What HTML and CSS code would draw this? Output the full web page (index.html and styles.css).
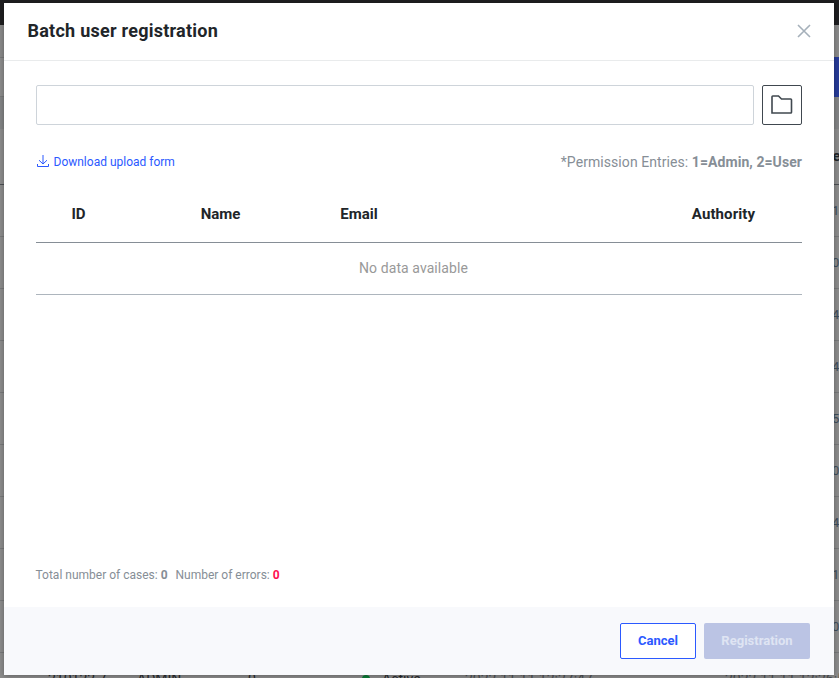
FILE: index.html
```html
<!DOCTYPE html>
<html lang="en">
<head>
<meta charset="utf-8">
<title>Batch user registration</title>
<link rel="stylesheet" href="styles.css">
</head>
<body>
<div class="page" aria-hidden="true">
  <div class="page-top"></div>
  <div class="page-strip"></div>
  <div class="page-tools"><span class="page-action"></span></div>
  <div class="page-gap"></div>
  <div class="page-head">te</div>
  <div class="page-row">1</div>
  <div class="page-row">0</div>
  <div class="page-row">4</div>
  <div class="page-row">4</div>
  <div class="page-row">5</div>
  <div class="page-row">0</div>
  <div class="page-row">4</div>
  <div class="page-row">1</div>
  <div class="page-row">0</div>
  <div class="page-row last"><span>210122 7</span><span>ADMIN</span><span>0</span><span class="state"><i></i>Active</span><span class="date">2022.11.11 12:27:47</span><span class="date">2022.11.11 12:26:55</span></div>
</div>

<section class="modal" role="dialog" aria-labelledby="title">
  <header class="modal-header">
    <h1 id="title">Batch user registration</h1>
    <button class="close" aria-label="Close"><svg width="14" height="14" viewBox="0 0 14 14"><path d="M1 1L13 13M13 1L1 13"/></svg></button>
  </header>
  <div class="modal-body">
    <div class="picker">
      <input type="text" aria-label="File">
      <button class="browse" aria-label="Browse"><svg width="22" height="20" viewBox="0 0 22 20"><path d="M1 18V1.8Q1 1 1.8 1H7.5L10.5 4H19.7Q20.5 4 20.5 4.8V17.2Q20.5 18 19.7 18Z"/></svg></button>
    </div>
    <div class="hints">
      <a class="download"><svg width="12" height="13" viewBox="0 0 12 13"><path d="M6 0V9M2 5.2L6 9L10 5.2M.5 9V11.5H11.5V9"/></svg>Download upload form</a>
      <p>*Permission Entries: <b>1=Admin, 2=User</b></p>
    </div>
    <div class="thead"><span>ID</span><span>Name</span><span>Email</span><span>Authority</span></div>
    <div class="empty">No data available</div>
    <div class="totals"><span>Total number of cases: <b>0</b></span><span>Number of errors: <b class="error">0</b></span></div>
  </div>
  <footer class="modal-footer">
    <button class="btn cancel">Cancel</button>
    <button class="btn submit" disabled>Registration</button>
  </footer>
</section>
</body>
</html>
```
FILE: styles.css
```css
* { box-sizing: border-box; }
body {
  margin: 0;
  width: 839px;
  height: 678px;
  overflow: hidden;
  position: relative;
  font-family: Roboto, sans-serif;
  color: #212529;
}
h1, p { margin: 0; }
button { padding: 0; font-family: inherit; }
svg { display: block; fill: none; stroke: currentColor; }

/* Dimmed page under the dialog */
.page { height: 678px; overflow: hidden; background: #8b8b8b; }
.page-top { height: 25px; background: #1e1e20; }
.page-strip { height: 32px; background: #888; }
.page-tools {
  height: 40px;
  display: flex;
  justify-content: flex-end;
  border-top: 1px solid #777879;
  border-bottom: 1px solid #777879;
}
.page-action { width: 20px; height: 40px; margin-top: -1px; background: #263a96; flex: none; }
.page-gap { height: 32px; background: #828384; }
.page-head {
  height: 56px;
  padding-left: 827px;
  line-height: 55px;
  font-size: 15px;
  font-weight: 700;
  letter-spacing: .3px;
  border-bottom: 1px solid #4b4f53;
}
.page-row {
  height: 52px;
  padding-left: 832px;
  line-height: 52px;
  font-size: 13px;
  color: #3f4d5a;
  border-bottom: 1px solid #777879;
}
.page-row.last {
  display: grid;
  grid-template-columns: 89px 111px 113px 107px 260px 111px;
  padding-left: 48px;
  font-size: 14px;
  color: #25282b;
  white-space: nowrap;
}
.page-row .date { margin-left: -3px; color: #4b4f53; }
.state { display: flex; align-items: center; gap: 12px; }
.state i { width: 8px; height: 8px; margin-left: 1px; border-radius: 50%; background: #087b35; }

.modal {
  position: absolute;
  left: 4px;
  top: 3px;
  width: 830px;
  height: 672px;
  display: flex;
  flex-direction: column;
  background: #fff;
  box-shadow: 0 1px 5px rgba(0, 0, 0, .3);
}
.modal-header {
  height: 58px;
  flex: none;
  display: flex;
  align-items: center;
  justify-content: space-between;
  padding: 0 23px 2px 23.5px;
  border-bottom: 1px solid #e9ebec;
}
.modal-header h1 { font-size: 18px; line-height: 24px; font-weight: 700; letter-spacing: .25px; }
.close { border: 0; background: none; color: #a5b0ba; }
.close svg { stroke-width: 1.6; }

.modal-body {
  flex: 1;
  display: flex;
  flex-direction: column;
  padding: 24px 32px 0;
}
.picker { display: flex; gap: 8px; }
.picker input {
  flex: 1;
  height: 40px;
  border: 1px solid #ced4da;
  border-radius: 2px;
  background: #fff;
}
.browse {
  width: 40px;
  height: 40px;
  display: flex;
  align-items: center;
  justify-content: center;
  border: 1px solid #40484f;
  border-radius: 2px;
  background: #fff;
  color: #40484f;
}
.browse svg { stroke-width: 1.6; }
.hints {
  height: 74px;
  display: flex;
  align-items: center;
  justify-content: space-between;
  font-size: 14px;
  line-height: 20px;
  color: #868e96;
}
.hints p { letter-spacing: .07px; }
.download { display: flex; align-items: center; gap: 4.5px; padding-left: 1px; font-size: 12px; color: #2b59ff; }
.download svg { margin-bottom: 2px; }
.thead {
  height: 44px;
  display: grid;
  grid-template-columns: 85px 199px 78px 247px 1fr;
  padding-bottom: 14px;
  border-bottom: 1px solid #868e96;
  font-size: 15px;
  font-weight: 700;
  line-height: 30px;
  text-align: center;
}
.thead span:nth-child(4) { grid-column: 5; letter-spacing: .1px; }
.empty {
  height: 52px;
  padding-right: 11px;
  border-bottom: 1px solid #adb5bd;
  font-size: 14px;
  line-height: 51px;
  letter-spacing: .08px;
  text-align: center;
  color: #999;
}
.totals { display: flex; gap: 8px; margin: auto 0 24px -.5px; font-size: 12px; line-height: 16px; color: #868e96; }
.totals .error { color: #ff1150; }

.modal-footer {
  height: 68px;
  flex: none;
  display: flex;
  align-items: center;
  justify-content: flex-end;
  gap: 8px;
  padding-right: 24px;
  background: #f8f9fc;
}
.btn { height: 36px; padding-bottom: 2px; border-radius: 2px; font-size: 13px; font-weight: 700; }
.cancel { width: 76px; border: 1px solid #2b59ff; background: #fff; color: #2b59ff; }
.submit { width: 106px; border: 0; background: #bbc4e4; color: #dfe4f3; }
```
